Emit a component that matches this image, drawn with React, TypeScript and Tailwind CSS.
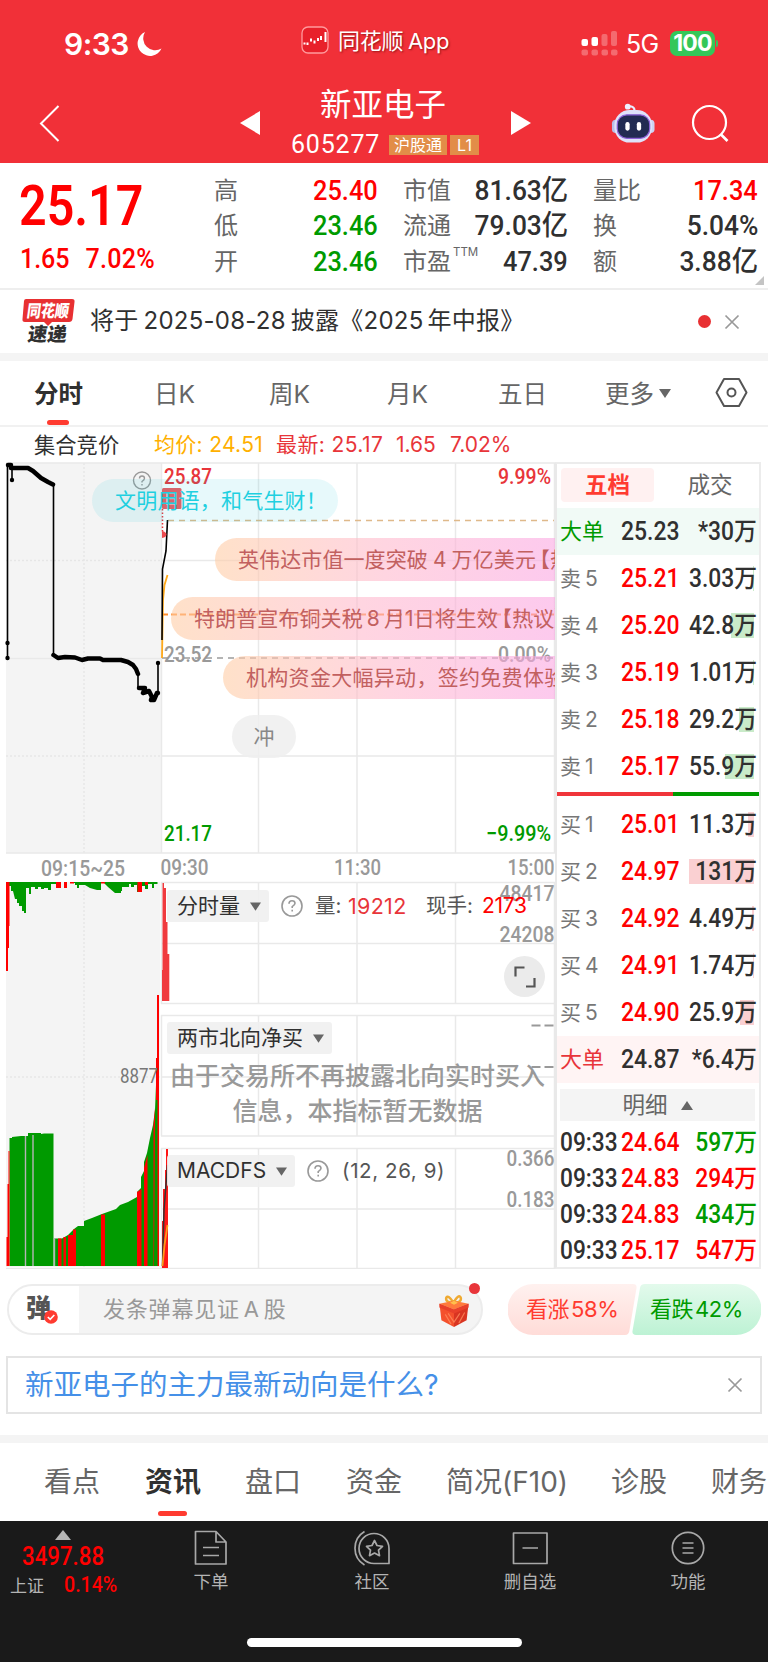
import { clsx } from "clsx";

const DIN = "font-[Roboto,'Noto_Sans_CJK_SC',sans-serif]";

interface Quote {
  label: string;
  value: string;
  color: string;
  note?: string;
}

interface Level {
  label: string;
  price: string;
  volume: string;
  bar: number;
}

const quoteColumns: { className: string; items: Quote[] }[] = [
  {
    className: "ml-[214px] w-[164px]",
    items: [
      { label: "高", value: "25.40", color: "text-[#ff0000]" },
      { label: "低", value: "23.46", color: "text-[#009a00]" },
      { label: "开", value: "23.46", color: "text-[#009a00]" },
    ],
  },
  {
    className: "ml-[25px] w-[165px]",
    items: [
      { label: "市值", value: "81.63亿", color: "text-[#303030]" },
      { label: "流通", value: "79.03亿", color: "text-[#303030]" },
      { label: "市盈", value: "47.39", color: "text-[#303030]", note: "TTM" },
    ],
  },
  {
    className: "ml-[25px] w-[165px]",
    items: [
      { label: "量比", value: "17.34", color: "text-[#ff0000]" },
      { label: "换", value: "5.04%", color: "text-[#303030]" },
      { label: "额", value: "3.88亿", color: "text-[#303030]" },
    ],
  },
];

const sells: Level[] = [
  { label: "卖 5", price: "25.21", volume: "3.03万", bar: 1 },
  { label: "卖 4", price: "25.20", volume: "42.8万", bar: 23 },
  { label: "卖 3", price: "25.19", volume: "1.01万", bar: 1 },
  { label: "卖 2", price: "25.18", volume: "29.2万", bar: 15 },
  { label: "卖 1", price: "25.17", volume: "55.9万", bar: 29 },
];

const buys: Level[] = [
  { label: "买 1", price: "25.01", volume: "11.3万", bar: 6 },
  { label: "买 2", price: "24.97", volume: "131万", bar: 65 },
  { label: "买 3", price: "24.92", volume: "4.49万", bar: 2 },
  { label: "买 4", price: "24.91", volume: "1.74万", bar: 1 },
  { label: "买 5", price: "24.90", volume: "25.9万", bar: 14 },
];

const trades = [
  { time: "09:33", price: "24.64", volume: "597万", up: false },
  { time: "09:33", price: "24.83", volume: "294万", up: true },
  { time: "09:33", price: "24.83", volume: "434万", up: false },
  { time: "09:33", price: "25.17", volume: "547万", up: true },
];

function StatusBar() {
  return (
    <div className="relative h-[84px] text-white">
      <div className="absolute left-[64px] top-[26px] text-[30px] leading-[36px] font-semibold tracking-[-0.5px]">9:33</div>
      <svg className="absolute left-[137px] top-[31px]" width="26" height="26" viewBox="0 0 26 26" fill="#fff">
        <path d="M8 1A12.5 12.5 0 1 0 24.500 17.500A12 12 0 0 1 8 1Z" />
      </svg>
      <svg className="absolute left-[301px] top-[26px]" width="28" height="28" viewBox="0 0 28 28">
        <rect x="1" y="1" width="26" height="26" rx="6" fill="#e8202a" stroke="#ff9a9d" strokeWidth="1.3" />
        <path d="M2.500 17.500h2M6.500 16.500v2.500M10 12.500v3M13.500 14.500v3M17 12v3M20 10v4M24.500 6v10" stroke="#fff" strokeWidth="2" />
      </svg>
      <div className="absolute left-[338px] top-[26px] text-[22px] leading-[30px] whitespace-nowrap tracking-[-0.3px] [word-spacing:-1px] [text-shadow:1px_1px_2px_rgba(90,0,0,.6)]">
        同花顺 App
      </div>
      <svg className="absolute left-[581px] top-[31px]" width="38" height="26" viewBox="0 0 38 26" fill="#fff">
        <rect x="0.500" y="8" width="6.500" height="7" rx="2" />
        <rect x="10.500" y="6" width="6.500" height="9" rx="2" />
        <g opacity=".28">
          <rect x="20.500" y="3" width="6" height="12" rx="2" />
          <rect x="30" y="0" width="6" height="15" rx="2" />
          <rect x="0.500" y="18.500" width="6.500" height="6" rx="2" />
          <rect x="10.500" y="18.500" width="6.500" height="6" rx="2" />
          <rect x="20.500" y="18.500" width="6.500" height="6" rx="2" />
          <rect x="30" y="18.500" width="6.500" height="6" rx="2" />
        </g>
      </svg>
      <div className="absolute left-[626px] top-[29px] text-[25px] leading-[30px] tracking-[-0.6px]">5G</div>
      <div className="absolute left-[670px] top-[31px] h-[25px] w-[45px] rounded-[7px] bg-[#34c759] text-center text-[23px] leading-[25px] font-bold tracking-[-0.8px]">
        100
      </div>
      <div className="absolute left-[716px] top-[40px] h-[7px] w-[2px] rounded-r bg-[#34c759]" />
    </div>
  );
}

function Robot() {
  return (
    <svg className="absolute left-[611px] top-[18px]" width="44" height="42" viewBox="0 0 46 43">
      <path d="M17 4.500C21 3 25 5 24.500 9" fill="none" stroke="#e8ebff" strokeWidth="2.200" />
      <circle cx="17.500" cy="4.500" r="3" fill="#eef0ff" />
      <rect x="1" y="18" width="8" height="14" rx="4" fill="#b9bfe8" />
      <rect x="37.500" y="18" width="8" height="14" rx="4" fill="#cdd2f2" />
      <rect x="3.500" y="8" width="39.500" height="34" rx="16" fill="#dfe2fa" />
      <rect x="6.500" y="13" width="34" height="24.500" rx="10" fill="#222b52" stroke="#8d62d8" strokeWidth="1.200" />
      <rect x="15" y="20.500" width="4.500" height="9" rx="2.200" fill="#fff" />
      <rect x="27" y="20.500" width="4.500" height="9" rx="2.200" fill="#fff" />
    </svg>
  );
}

function TitleBar() {
  return (
    <div className="relative h-[79px] text-white">
      <svg className="absolute left-[38px] top-[20px]" width="24" height="40" viewBox="0 0 24 40" fill="none" stroke="#fff" strokeWidth="2">
        <path d="M20.500 2L3 19.500L20.500 37" />
      </svg>
      <svg className="absolute left-[240px] top-[27px]" width="20" height="24" fill="#fff"><path d="M0 12L20 0V24Z" /></svg>
      <svg className="absolute left-[511px] top-[27px]" width="20" height="24" fill="#fff"><path d="M20 12L0 0V24Z" /></svg>
      <div className="absolute left-[320px] top-0 text-[31.500px] leading-[42px] whitespace-nowrap">新亚电子</div>
      <div className="absolute left-[291px] top-[49px] flex items-center">
        <span className={clsx(DIN, "w-[98px] text-[25px] leading-[24px] tracking-[0.8px]")}>605277</span>
        <span className="h-[20px] w-[58px] bg-[#e28d48] text-center text-[16px] leading-[20px]">沪股通</span>
        <span className="ml-[3px] h-[20px] w-[29px] bg-[#e28d48] text-center text-[16px] leading-[20px]">L1</span>
      </div>
      <Robot />
      <svg className="absolute left-[691px] top-[20px]" width="40" height="40" viewBox="0 0 40 40" fill="none" stroke="#fff" strokeWidth="2.200">
        <circle cx="18.500" cy="18.500" r="16.500" />
        <path d="M29.500 30L36.500 37" strokeWidth="2.600" />
      </svg>
    </div>
  );
}

function QuotePanel() {
  return (
    <section className="relative flex h-[127px] border-b-2 border-[#eeeeee]">
      <div className={clsx(DIN, "absolute left-[19px] top-[15px] w-0 whitespace-nowrap font-semibold text-[#ff0000]")}>
        <div className="origin-left scale-x-[.88] text-[55px] leading-[56px]">25.17</div>
        <div className="flex origin-left scale-x-[.88] gap-[18px] pl-[1px] pt-[9px] text-[28.500px] leading-[32px] font-medium">
          <span>1.65</span>
          <span className="tracking-[0.3px]">7.02%</span>
        </div>
      </div>
      {quoteColumns.map((col, i) => (
        <div key={i} className={clsx("shrink-0 pt-[8px]", col.className)}>
          {col.items.map((q) => (
            <div key={q.label} className="flex h-[35.500px] items-center justify-between">
              <span className="relative top-[2px] text-[24px] whitespace-nowrap text-[#666]">
                {q.label}
                {q.note && <sup className="absolute left-[50px] top-[2px] text-[11.500px] leading-[12px]">{q.note}</sup>}
              </span>
              <span
                className={clsx(
                  DIN,
                  "relative top-[2.500px] origin-right text-[28.500px] font-medium whitespace-nowrap",
                  /[亿%]/.test(q.value) ? "scale-x-[.925]" : "scale-x-[.89]",
                  q.color
                )}
              >
                {q.value}
              </span>
            </div>
          ))}
        </div>
      ))}
      <svg className="absolute bottom-[3px] left-[755px]" width="9" height="9" fill="#c4c4c4"><path d="M9 0V9H0Z" /></svg>
    </section>
  );
}

function Cross({ className }: { className?: string }) {
  return (
    <svg className={className} width="16" height="16" viewBox="0 0 16 16" stroke="#999" strokeWidth="1.700">
      <path d="M1.500 1.500L14.500 14.500M14.500 1.500L1.500 14.500" />
    </svg>
  );
}

function Notice() {
  return (
    <section className="flex h-[64px] items-center border-b border-[#f4f4f4]">
      <svg className="ml-[20px] shrink-0 overflow-visible" width="58" height="48" viewBox="0 0 58 48">
        <path d="M6 1H52Q55 1 54.500 4L52.500 21Q52 24 49 24H32L28 28L24 24H5Q2 24 2.500 21L4 3Q4.200 1 6 1Z" fill="#e83032" />
        <g fontFamily="Noto Sans CJK SC, sans-serif" fontWeight="900" transform="skewX(-8)">
          <text x="9" y="19" fontSize="17" fill="#fff" textLength="42" lengthAdjust="spacingAndGlyphs">同花顺</text>
          <text x="13" y="43" fontSize="19" fill="#303030" textLength="39" lengthAdjust="spacingAndGlyphs">速递</text>
        </g>
      </svg>
      <div className="relative top-[-1px] ml-[12px] text-[24px] tracking-[0.25px] whitespace-nowrap text-[#303030]">
        将于<span className="mx-[5px]">2025-08-28</span>披露《2025<span className="ml-[4px]">年中报》</span>
      </div>
      <span className="ml-auto size-[13px] rounded-full bg-[#e83032]" />
      <Cross className="ml-[13px] mr-[28px]" />
    </section>
  );
}

function PeriodTabs() {
  const tab = "absolute top-[2px] text-[24.500px] leading-[62px] whitespace-nowrap text-[#666]";
  return (
    <nav className="relative h-[66px] border-b-2 border-[#f1f1f1]">
      <span className={clsx(tab, "left-[34px] font-bold text-[#303030]")}>分时</span>
      <span className={clsx(tab, "left-[154px]")}>日K</span>
      <span className={clsx(tab, "left-[269px]")}>周K</span>
      <span className={clsx(tab, "left-[387px]")}>月K</span>
      <span className={clsx(tab, "left-[498px]")}>五日</span>
      <span className={clsx(tab, "left-[605px]")}>更多</span>
      <svg className="absolute left-[659px] top-[28px]" width="12" height="9" fill="#666"><path d="M0 0H12L6 9Z" /></svg>
      <svg className="absolute left-[715px] top-[16px]" width="33" height="31" viewBox="0 0 33 31" fill="none" stroke="#555" strokeWidth="2">
        <path d="M9 2H24L31.500 15.500L24 29H9L1.500 15.500Z" strokeLinejoin="round" />
        <circle cx="16.500" cy="15.500" r="4" />
      </svg>
      <span className="absolute left-[47px] top-[59px] h-[5px] w-[22px] rounded-full bg-[#ff3b30]" />
    </nav>
  );
}

function ChartLegend() {
  return (
    <div className="relative h-[35px] text-[21px] leading-[36px] whitespace-nowrap">
      <span className="absolute left-[34px] text-[21.300px] text-[#303030]">集合竞价</span>
      <span className="absolute left-[154px] tracking-[0.3px] text-[#ffb000]">均价: 24.51</span>
      <span className="absolute left-[276px] tracking-[0.4px] text-[#e8353a]">最新: 25.17</span>
      <span className="absolute left-[396px] text-[#e8353a]">1.65</span>
      <span className="absolute left-[450px] text-[#e8353a]">7.02%</span>
    </div>
  );
}

function PriceChart() {
  return (
    <svg className="block" width="556" height="392" viewBox="0 462 556 392" fontFamily="Roboto, sans-serif" fontSize="22" fontWeight="500">
      <rect x="6" y="463" width="155" height="390" fill="#f4f4f4" />
      <g stroke="#e9e9e9" strokeWidth="1.500" fill="none">
        <path d="M84 463V853M6 560.500H161M6 756H161" strokeDasharray="2 2" stroke="#e6e6e6" />
        <path d="M6 463H555M6 658.500H161M161.500 463V853M258.500 463V853M357 463V853M455.500 463V853M554.500 463V853M161 560.500H555M161 756H555M6 853H555" />
      </g>
      {/* call auction trace */}
      <path d="M7.500 464V658M12 466V479M53.500 485V655M138 673V688M158 663V692" stroke="#000" strokeWidth="1.600" fill="none" />
      <path d="M8 465H11M11 468H28L33 471L41 478L48 482L53 484.500M53.500 655L58 658L65 657L75 657.500L82 660L88 658.500H100L103 660H121L128 662L133 665L136 669L138 674M139 688H145L143 693L149 691L152 697L151 700H154L157 693" stroke="#000" strokeWidth="4.500" fill="none" strokeLinecap="round" strokeLinejoin="round" />
      <g>
        {[[12, 480], [7.5, 643], [7.5, 658], [158, 663], [158, 693]].map(([x, y]) => (
          <circle key={`${x}-${y}`} cx={x} cy={y} r="2.200" />
        ))}
      </g>
      <path d="M168 520.500H554" stroke="#dfb98a" strokeWidth="1.400" strokeDasharray="6 5" />
      <path d="M162 614.500H554" stroke="#ff8d2e" strokeWidth="1.800" strokeDasharray="6 3" />
      <path d="M162 658H554" stroke="#9c9c9c" strokeWidth="1.400" strokeDasharray="6 5" />
      <path d="M162 658L163 600L164.500 585L167.500 575" stroke="#ffa91a" strokeWidth="1.800" fill="none" />
      <path d="M162 640L162.500 569L166 551L167.500 520" stroke="#000" strokeWidth="1.600" fill="none" />
      <rect x="162" y="488" width="19.500" height="21" rx="1.500" fill="#ec5b60" />
      <path d="M167 493H176V504H167ZM167 498.500H176" fill="none" stroke="#f7c0c0" strokeWidth="1.600" />
      <path d="M162.500 509V532" stroke="#e8353a" strokeWidth="1.500" strokeDasharray="1.500 2" />
      <path d="M162 531Q166.500 532 166.500 534.500Q166.500 537 162 538Z" fill="#ec4b50" />
      <g>
        <text x="164" y="483.500" fill="#e8353a" textLength="48" lengthAdjust="spacingAndGlyphs">25.87</text>
        <text x="498" y="483.500" fill="#e8353a" textLength="53" lengthAdjust="spacingAndGlyphs">9.99%</text>
        <text x="164" y="662" fill="#999" textLength="48" lengthAdjust="spacingAndGlyphs">23.52</text>
        <text x="498" y="662" fill="#999" textLength="53" lengthAdjust="spacingAndGlyphs">0.00%</text>
        <text x="164" y="840.500" fill="#009a00" textLength="48" lengthAdjust="spacingAndGlyphs">21.17</text>
        <text x="486" y="840.500" fill="#009a00" textLength="65" lengthAdjust="spacingAndGlyphs">−9.99%</text>
      </g>
      <g fill="none" stroke="#999" strokeWidth="1.400">
        <circle cx="142" cy="480.500" r="8.500" />
        <path d="M139.500 478.500Q139.500 476 142 476Q144.500 476 144.500 478.300Q144.500 479.800 142 481.500V482.500M142 484V485.500" />
      </g>
    </svg>
  );
}

const bullet = "absolute flex h-[43px] items-center rounded-full whitespace-nowrap text-[21px]";
const hotBullet = "right-0 rounded-r-none overflow-hidden bg-linear-to-r from-[#ffcda5]/60 via-[#ffb9cd]/60 to-[#fba6e2]/60 pl-[23px] text-[#c2605f]";

function Bullets() {
  return (
    <div className="absolute left-0 top-0 h-[392px] w-[555px] overflow-hidden">
      <div className={clsx(bullet, "left-[92px] top-[17px] w-[246px] bg-[#18c8d8]/10 pl-[23px] tracking-[0.2px] text-[#1fd0e0]")}>
        文明用语，和气生财！
      </div>
      <div className={clsx(bullet, hotBullet, "left-[215px] top-[76px] tracking-[0.1px]")}>
        英伟达市值一度突破<span className="mx-[5px]">4</span>万亿美元<span className="ml-[-7px]">【热议】</span>
      </div>
      <div className={clsx(bullet, hotBullet, "left-[171px] top-[135px] tracking-[0.1px]")}>
        特朗普宣布铜关税<span className="mx-[4px]">8</span>月1日将生效<span className="ml-[-7px]">【热议】</span>
      </div>
      <div className={clsx(bullet, hotBullet, "left-[223px] top-[194px] tracking-[0.3px]")}>机构资金大幅异动，签约免费体验</div>
      <div className={clsx(bullet, "left-[232px] top-[253px] h-[42px] w-[64px] justify-center bg-[#efefef]/85 text-[20px] text-[#888]")}>冲</div>
    </div>
  );
}

function TimeAxis() {
  return (
    <svg className="block" width="556" height="27" viewBox="0 854 556 27" fontFamily="Roboto, sans-serif" fontSize="22" fontWeight="500" fill="#999">
      <text x="41" y="876" textLength="84" lengthAdjust="spacingAndGlyphs">09:15~25</text>
      <text x="160.500" y="874.500" textLength="48" lengthAdjust="spacingAndGlyphs">09:30</text>
      <text x="334" y="874.500" textLength="47" lengthAdjust="spacingAndGlyphs">11:30</text>
      <text x="507.500" y="874.500" textLength="47" lengthAdjust="spacingAndGlyphs">15:00</text>
    </svg>
  );
}

function IndicatorCharts() {
  return (
    <svg className="absolute left-0 top-0" width="556" height="388" viewBox="0 881 556 388" fontFamily="Roboto, sans-serif" fontSize="22" fill="#999">
      <rect x="6" y="882" width="154" height="385" fill="#f4f4f4" />
      <path d="M84 882V1267M6 1077H161" stroke="#e6e6e6" strokeWidth="1.500" strokeDasharray="2 2" />
      <path d="M161 882.500H555M161 943.500H555M161 1003.500H555M161 1015.500H555M161 1077H555M161 1136H555M161 1148.500H555M161 1209H555M6 1268.500H555M161.500 882V1004M161.500 1015V1136M161.500 1148V1269M258.500 882V1004M258.500 1015V1136M258.500 1148V1269M357 882V1004M357 1015V1136M357 1148V1269M455.500 882V1004M455.500 1015V1136M455.500 1148V1269M554.500 882V1269" stroke="#e9e9e9" strokeWidth="1.500" />

      {/* unmatched auction volume hanging from the top */}
      <g fill="#009a00">
        <path d="M9 882H157.500V884H154V888H152V884H148V889H145V886H140V892H137V885H134V887H131V884H129V887H122V891H121V893H115L108 887L104 883H101V890H97L90 888L85 885H79V888H77V885H75V883H70V882H58V884H51V890H48V888H44V889H41V887H38V889H35V887H31V894H29V888H26V913H24V911H22V906H19V903H17V899H15L13 891H11V886H9Z" />
        <path d="M9.500 1266V1138H12V1137L21 1136H28V1133H41V1134L44 1133.500H53.500V1266ZM54.500 1266V1238.500H62L68 1235L74 1229L78 1226H84V1221L92 1218L102 1214L116 1209L120 1205L128 1202L137 1197V1192L141 1188V1177L144 1171V1162L147 1153L150 1138L153 1125L155 1110L156 1085H159V1266Z" />
      </g>
      <g fill="#ff0000">
        <path d="M6 882H9.500V926H9V948H8V971H6ZM56 882H61V888H56ZM64 882H67V888H64ZM137.500 882H142V892H137.500ZM101 882H105V883.500H101ZM70 882H74V883.500H70ZM145 882H148V885H145Z" />
        <path d="M6.500 1266V1237H7.500V1184H8.500V1151H9.500V1266ZM58 1266V1238.500H61.500V1266ZM63.500 1266V1237H66V1266ZM68 1266V1235H73V1229.500H76V1266ZM101 1266V1214.500H105V1266ZM137 1266V1192L141.500 1189V1266ZM144 1266V1168L147.500 1155V1266ZM153.500 1125L155 1108V1120L154 1266H153.500ZM156 1100V1058H157V995H159V1266H157.500V1100Z" />
      </g>
      <path d="M25.500 1136V1266M33 1135V1266M54.500 1238V1266" stroke="#b5b5b5" strokeWidth="1.400" />
      <text x="120" y="1082.500" fontSize="20" textLength="38" lengthAdjust="spacingAndGlyphs" fill="#777">8877</text>

      <path d="M162 1001V970H162.500V883H164V888H166V922H167.500V954H169.300V1001Z" fill="#f03a3e" />
      <path d="M162 1268V1221H163V1189H165V1170H166V1149H168V1268Z" fill="#ff1616" />
      <path d="M162.500 1266L164 1210L167.500 1165" stroke="#333" strokeWidth="1.500" fill="none" />
      <path d="M162.500 1266L164.500 1245L167.500 1225" stroke="#ff9a1a" strokeWidth="1.800" fill="none" />

      <g fontWeight="500">
        <text x="499.500" y="900.500" textLength="55" lengthAdjust="spacingAndGlyphs">48417</text>
        <text x="499.500" y="941.500" textLength="55" lengthAdjust="spacingAndGlyphs">24208</text>
        <text x="506.500" y="1165.500" textLength="48" lengthAdjust="spacingAndGlyphs">0.366</text>
        <text x="506.500" y="1207" textLength="48" lengthAdjust="spacingAndGlyphs">0.183</text>
        <path d="M531.500 1025.500H540.500M544.500 1025.500H553.500M531.500 1067H540.500M544.500 1067H553.500" stroke="#999" strokeWidth="1.800" />
      </g>
    </svg>
  );
}

function Chip({ children }: { children: string }) {
  return (
    <span className="flex h-[32px] items-center gap-[10px] rounded-[3px] bg-[#f0f0f0]/90 pl-[10px] pr-[8px] text-[21px] whitespace-nowrap text-[#303030]">
      {children}
      <svg width="11" height="9" viewBox="0 0 12 9" fill="#666"><path d="M0 0H12L6 9Z" /></svg>
    </span>
  );
}

function Help() {
  return (
    <svg className="shrink-0" width="22" height="22" viewBox="0 0 22 22" fill="none" stroke="#999" strokeWidth="1.600">
      <circle cx="11" cy="11" r="10" />
      <path d="M8 8.700Q8 5.700 11 5.700Q14 5.700 14 8.300Q14 10 11.200 11.600V13M11.200 14.700V16.500" />
    </svg>
  );
}

function Indicators() {
  return (
    <div className="relative h-[388px]">
      <IndicatorCharts />
      <div className="relative ml-[161px] flex flex-col">
        <div className="h-[134px] pl-[6px] pt-[9px]">
          <div className="flex items-center text-[20.500px] whitespace-nowrap text-[#555]">
            <Chip>分时量</Chip>
            <span className="ml-[12px]"><Help /></span>
            <span className="ml-[12px] w-[33px]">量:</span>
            <span className="w-[78px] text-[21.500px] tracking-[0.3px] text-[#e8353a]">19212</span>
            <span className="w-[56px]">现手:</span>
            <span className="text-[21px] tracking-[-0.3px] text-[#ff0000]">2173</span>
          </div>
          <div className="ml-[337px] mt-[34px] flex size-[41px] items-center justify-center rounded-full bg-[#ebebeb]">
            <svg width="22" height="22" viewBox="0 0 22 22" fill="none" stroke="#555" strokeWidth="2.200">
              <path d="M1.500 10.500V1.500H10.500M20.500 12V20.500H12" />
            </svg>
          </div>
        </div>
        <div className="h-[133px] pl-[6px] pt-[7px]">
          <div className="flex"><Chip>两市北向净买</Chip></div>
          <div className="ml-[-7px] mt-[5px] text-center text-[25px] leading-[35px] font-medium whitespace-nowrap text-[#999]">
            由于交易所不再披露北向实时买入
            <br />
            信息，本指标暂无数据
          </div>
        </div>
        <div className="pl-[6px] pt-[7px]">
          <div className="flex items-center text-[20.500px] whitespace-nowrap text-[#555]">
            <Chip>MACDFS</Chip>
            <span className="ml-[12px]"><Help /></span>
            <span className="ml-[13px] tracking-[0.6px]">(12, 26, 9)</span>
          </div>
        </div>
      </div>
    </div>
  );
}

const rowBase = "relative flex h-[47px] items-center whitespace-nowrap";
const priceCls = clsx(DIN, "absolute left-[64px] origin-left scale-x-[.9] text-[25.500px] font-medium");
const volumeCls = clsx(DIN, "absolute right-[2px] origin-right scale-x-[.895] text-[25.500px] font-medium");

function LevelRow({ level, side }: { level: Level; side: "sell" | "buy" }) {
  return (
    <div className={rowBase}>
      <span
        className={clsx("absolute right-[5px] h-[25px]", side === "sell" ? "bg-[#c9ebc9]" : "bg-[#fad0d2]")}
        style={{ width: level.bar }}
      />
      <span className="ml-[3px] pt-[1px] text-[21px] text-[#777] [word-spacing:-2px]">{level.label}</span>
      <span className={clsx(priceCls, "text-[#ff0000]")}>{level.price}</span>
      <span className={clsx(volumeCls, "text-[#303030]")}>{level.volume}</span>
    </div>
  );
}

function OrderBook() {
  return (
    <aside className="h-[807px] w-[206px] shrink-0 border-2 border-[#ececec] border-l-[#e9e9e9] bg-white">
      <div className="flex h-[43.500px] pl-[4px] pt-[4px] text-center text-[22.500px] leading-[34px]">
        <span className="h-[34px] w-[93px] rounded-[4px] bg-[#fff1f1] font-bold text-[#ff3b30]">五档</span>
        <span className="ml-[8px] w-[96px] shrink-0 text-[#666]">成交</span>
      </div>
      <div className={clsx(rowBase, "bg-[#f1faf6]")}>
        <span className="ml-[3px] text-[22px] text-[#009a00]">大单</span>
        <span className={clsx(priceCls, "text-[#303030]")}>25.23</span>
        <span className={clsx(volumeCls, "text-[#303030]")}>*30万</span>
      </div>
      {sells.map((l) => <LevelRow key={l.label} level={l} side="sell" />)}
      <div className="mb-[5px] mt-[2.500px] flex h-[4px]">
        <span className="w-[116px] bg-[#f0353a]" />
        <span className="grow bg-[#009a00]" />
      </div>
      {buys.map((l) => <LevelRow key={l.label} level={l} side="buy" />)}
      <div className={clsx(rowBase, "bg-[#fff4f4]")}>
        <span className="ml-[3px] text-[22px] text-[#e8353a]">大单</span>
        <span className={clsx(priceCls, "text-[#303030]")}>24.87</span>
        <span className={clsx(volumeCls, "text-[#303030]")}>*6.4万</span>
      </div>
      <div className="mb-[3px] ml-[3px] mr-[4px] mt-[6px] flex h-[32px] items-center justify-center gap-[13px] bg-[#f4f4f4] text-[22.500px] text-[#666]">
        明细
        <svg width="12" height="9" fill="#666"><path d="M0 9H12L6 0Z" /></svg>
      </div>
      {trades.map((t, i) => (
        <div key={i} className={clsx(rowBase, "h-[36px]!")}>
          <span className={clsx(DIN, "ml-[3px] origin-left scale-x-[.89] text-[25.500px] font-medium text-[#303030]")}>{t.time}</span>
          <span className={clsx(priceCls, "text-[#ff0000]")}>{t.price}</span>
          <span className={clsx(volumeCls, t.up ? "text-[#ff0000]" : "text-[#009a00]")}>{t.volume}</span>
        </div>
      ))}
    </aside>
  );
}

function Gift() {
  return (
    <svg className="absolute right-[12px] top-[9px]" width="30" height="32" viewBox="0 0 30 33">
      <path d="M14.500 8Q6 8 7 3Q9-1 14.500 8Q20-2 22 3Q23 8 14.500 8" fill="none" stroke="#efaa32" strokeWidth="2.600" />
      <path d="M0 9L15 6L30 9L15 15Z" fill="#ff7a3c" />
      <path d="M0 9L15 15V33L2 26Z" fill="#f4512d" />
      <path d="M30 9L15 15V33L28 26Z" fill="#d93522" />
      <path d="M0 9L15 15L30 9V13L15 19L0 13Z" fill="#e8402a" />
      <path d="M6 20L12 30M20 29L26 18M9 19L15 28L21 19" stroke="#ff8a5c" strokeWidth="1.200" fill="none" opacity=".8" />
      <path d="M11 8L15 6L19 8L15 10Z" fill="#ffc04c" />
    </svg>
  );
}

function BulletInput() {
  return (
    <section className="flex items-center pl-[7px] pt-[15px]">
      <div className="relative flex h-[51px] w-[476px] items-center rounded-full border-2 border-[#ececec] bg-[#f4f4f4]">
        <div className="relative h-full w-[70px] rounded-l-full bg-white">
          <span className="absolute left-[17px] top-[4px] text-[25px] leading-[36px] font-black text-[#555]">弹</span>
          <svg className="absolute left-[35px] top-[24px]" width="14" height="14" viewBox="0 0 14 14">
            <circle cx="7" cy="7" r="6.800" fill="#ff3b30" />
            <path d="M3.800 7L6.200 9.400L10.300 5" stroke="#fff" strokeWidth="1.600" fill="none" />
          </svg>
        </div>
        <span className="ml-[24px] text-[22px] text-[#999] tracking-[0.8px] [word-spacing:-3px]">发条弹幕见证 A 股</span>
        <Gift />
        <span className="absolute right-[1px] top-[-3px] size-[11px] rounded-full bg-[#e8353a]" />
      </div>
      <div className="relative ml-[25px] h-[51px] w-[253px] text-[22px] leading-[51px] whitespace-nowrap">
        <svg className="absolute left-0 top-0" width="253" height="51">
          <defs>
            <linearGradient id="up" x2="0" y2="1"><stop stopColor="#fff1ef" /><stop offset="1" stopColor="#ffdcd8" /></linearGradient>
            <linearGradient id="down" x2="0" y2="1"><stop stopColor="#e3faec" /><stop offset="1" stopColor="#bdf2d4" /></linearGradient>
          </defs>
          <path d="M25 0H125Q129 0 128.500 4L121.500 46Q121 51 117 51H25A25.500 25.500 0 0 1 25 0Z" fill="url(#up)" />
          <path d="M137 0H228A25.500 25.500 0 0 1 228 51H128Q124 51 124.500 47L132 4Q132.500 0 137 0Z" fill="url(#down)" />
        </svg>
        <span className="absolute left-[18px] tracking-[-0.4px] [word-spacing:-4px] text-[#ff3b30]">看涨 58%</span>
        <span className="absolute left-[142px] tracking-[-0.4px] [word-spacing:-4px] text-[#009a00]">看跌 42%</span>
      </div>
    </section>
  );
}

function NewsTabs() {
  const tab = "absolute top-0 text-[28px] leading-[78px] whitespace-nowrap text-[#666]";
  return (
    <nav className="relative h-[78px] overflow-hidden">
      <span className={clsx(tab, "left-[44px]")}>看点</span>
      <span className={clsx(tab, "left-[145px] font-bold text-[#303030]")}>资讯</span>
      <span className={clsx(tab, "left-[245px]")}>盘口</span>
      <span className={clsx(tab, "left-[346px]")}>资金</span>
      <span className={clsx(tab, "left-[446px]")}>简况(F10)</span>
      <span className={clsx(tab, "left-[611px]")}>诊股</span>
      <span className={clsx(tab, "left-[711px]")}>财务</span>
      <span className="absolute left-[158px] top-[68px] h-[5px] w-[29px] rounded-full bg-[#ff3b30]" />
    </nav>
  );
}

const navIcons = [
  {
    label: "下单",
    className: "left-[151px]",
    icon: <path d="M2.500 1.500H23L33 12V34H2.500ZM23 1.500V12H33M10 17.500H26M10 25.500H26" />,
  },
  {
    label: "社区",
    className: "left-[312px]",
    icon: (
      <>
        <path d="M35 33.500H20A15 15 0 1 1 35 18.500ZM10.500 35A19.500 19.500 0 0 1 10.500 1.500" />
        <path d="M20.500 10.500L23 15.500L28.500 16.300L24.500 20.200L25.500 25.700L20.500 23L15.500 25.700L16.500 20.200L12.500 16.300L18 15.500Z" />
      </>
    ),
  },
  {
    label: "删自选",
    className: "left-[470px]",
    icon: <path d="M1.500 3H35V33.500H1.500ZM10.500 18H26" />,
  },
  {
    label: "功能",
    className: "left-[628px]",
    icon: (
      <>
        <circle cx="18" cy="18" r="15.700" />
        <path d="M12.500 13H23.500M12.500 18H23.500M12.500 23H23.500" />
      </>
    ),
  },
];

function BottomBar() {
  return (
    <footer className="relative h-[141px] bg-[#1a1a1a] text-[#b4b4b4]">
      <svg className="absolute left-[55px] top-[9px]" width="16" height="10" fill="#b4b4b4"><path d="M0 10H16L8 0Z" /></svg>
      <div className={clsx(DIN, "absolute left-[22px] top-[22px] w-0 text-[25px] leading-[28px] font-medium text-[#ff0000]")}>
        <div className="w-max origin-left scale-x-[.89]">3497.88</div>
      </div>
      <div className="absolute left-[10px] top-[50px] flex items-center whitespace-nowrap">
        <span className="pt-[2px] text-[17px] leading-[26px]">上证</span>
        <span className={clsx(DIN, "ml-[20px] origin-left scale-x-[.89] text-[22px] leading-[26px] font-medium text-[#ff0000]")}>0.14%</span>
      </div>
      {navIcons.map((n) => (
        <div key={n.label} className={clsx("absolute top-[9px] flex w-[120px] flex-col items-center", n.className)}>
          <svg width="36" height="36" viewBox="0 0 36 36" fill="none" stroke="#a8a8a8" strokeWidth="1.700" strokeLinejoin="round">{n.icon}</svg>
          <span className="text-[17.500px] leading-[32px] whitespace-nowrap">{n.label}</span>
        </div>
      ))}
      <div className="absolute left-[247px] top-[117px] h-[9px] w-[275px] rounded-full bg-white" />
    </footer>
  );
}

export default function App() {
  return (
    <div className="h-[1662px] w-[768px] overflow-hidden bg-white font-[Inter,'Noto_Sans_CJK_SC',sans-serif]">
      <header className="bg-[#f13038]">
        <StatusBar />
        <TitleBar />
      </header>
      <QuotePanel />
      <Notice />
      <div className="h-[7px] bg-[#f4f4f4]" />
      <PeriodTabs />
      <ChartLegend />
      <main className="flex h-[807px]">
        <div className="relative w-[555px] shrink-0">
          <PriceChart />
          <Bullets />
          <TimeAxis />
          <Indicators />
        </div>
        <OrderBook />
      </main>
      <BulletInput />
      <div className="mx-[6px] mt-[21px] flex h-[58px] items-center justify-between border-2 border-[#e4e4e4] pl-[17px] pr-[17px]">
        <span className="text-[28.500px] text-[#4590e8]">新亚电子的主力最新动向是什么?</span>
        <Cross />
      </div>
      <div className="mt-[21px] h-[8px] bg-[#f4f4f4]" />
      <NewsTabs />
      <BottomBar />
    </div>
  );
}
